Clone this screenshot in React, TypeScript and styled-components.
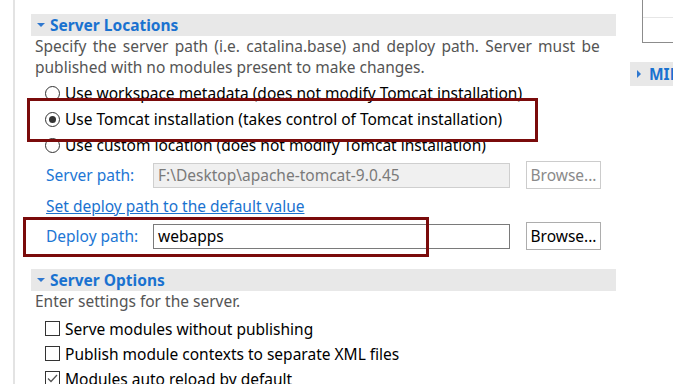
import React from 'react'
import styled, { createGlobalStyle } from 'styled-components'

const GlobalStyle = createGlobalStyle`
  html, body {
    margin: 0;
    padding: 0;
    background: #ffffff;
    overflow: hidden;
  }
  body {
    font-family: "Noto Sans", "Liberation Sans", sans-serif;
    font-size: 15.5px;
    color: #000;
  }
`

const Page = styled.div`
  display: flex;
  width: 673px;
  height: 384px;
  overflow: hidden;
`

const Rail = styled.div`
  width: 13px;
  flex: none;
  border-right: 2px solid #e3e3e3;
  margin-right: 16px;
`

const Main = styled.div`
  position: relative;
  width: 585px;
  flex: none;
  padding-top: 14px;
  display: flex;
  flex-direction: column;
`

const SectionHeader = styled.div<{ $top?: number }>`
  display: flex;
  align-items: center;
  height: 22px;
  margin-top: ${p => p.$top ?? 0}px;
  background: #e8e8e8;
  padding-left: 6px;
  gap: 5px;
  color: #1a72d0;
  font-weight: bold;
  font-size: 15.5px;
`

const Caret = styled.span<{ $open?: boolean }>`
  width: 0;
  height: 0;
  ${p => p.$open
    ? `border-left: 4px solid transparent;
       border-right: 4px solid transparent;
       border-top: 4px solid #2f78cf;`
    : `border-top: 4px solid transparent;
       border-bottom: 4px solid transparent;
       border-left: 4px solid #2f78cf;`}
`

const Description = styled.div`
  color: #555;
  line-height: 21px;
  padding-left: 4px;
  white-space: nowrap;
`

const WideLine = styled.span`
  word-spacing: 2.2px;
`

const Options = styled.div<{ $top: number }>`
  display: flex;
  flex-direction: column;
  padding-left: 14px;
  margin-top: ${p => p.$top}px;
`

const OptionRow = styled.div<{ $h: number }>`
  display: flex;
  align-items: center;
  gap: 5px;
  height: ${p => p.$h}px;
  line-height: 20px;
  white-space: nowrap;
`

const Radio = styled.span<{ $checked?: boolean }>`
  position: relative;
  box-sizing: border-box;
  width: 15px;
  height: 15px;
  flex: none;
  border: 1px solid #333;
  border-radius: 50%;
  background: #fff;
  &::after {
    content: '';
    display: ${p => (p.$checked ? 'block' : 'none')};
    position: absolute;
    left: 3px;
    top: 3px;
    width: 7px;
    height: 7px;
    border-radius: 50%;
    background: #333;
  }
`

const Check = styled.span`
  box-sizing: border-box;
  width: 15px;
  height: 15px;
  flex: none;
  border: 1px solid #333;
  background: #fff;
  display: flex;
  align-items: center;
  justify-content: center;
`

const FieldRow = styled.div<{ $top: number }>`
  display: flex;
  align-items: center;
  margin-top: ${p => p.$top}px;
  padding-left: 15px;
`

const FieldLabel = styled.span`
  width: 107px;
  flex: none;
  color: #2176d4;
`

const TextInput = styled.div<{ $disabled?: boolean }>`
  box-sizing: border-box;
  width: 357px;
  height: 25px;
  display: flex;
  align-items: center;
  padding-left: 4px;
  border: 1px solid ${p => (p.$disabled ? '#cfcfcf' : '#7a7a7a')};
  background: ${p => (p.$disabled ? '#f0f0f0' : '#fff')};
  color: ${p => (p.$disabled ? '#7a7a7a' : '#000')};
`

const Button = styled.div<{ $disabled?: boolean }>`
  box-sizing: border-box;
  width: 75px;
  height: 28px;
  margin-left: 16px;
  display: flex;
  align-items: center;
  justify-content: center;
  border: 1px solid ${p => (p.$disabled ? '#cccccc' : '#adadad')};
  background: #fff;
  color: ${p => (p.$disabled ? '#8a8a8a' : '#000')};
`

const Link = styled.a`
  margin: 7px 0 3px 15px;
  color: #1a72d0;
  text-decoration: underline;
  line-height: 21px;
  cursor: pointer;
`

const Highlight = styled.div<{ $l: number; $t: number; $w: number; $h: number }>`
  position: absolute;
  left: ${p => p.$l}px;
  top: ${p => p.$t}px;
  width: ${p => p.$w}px;
  height: ${p => p.$h}px;
  box-sizing: border-box;
  border: 3px solid #7a0b0b;
  pointer-events: none;
`

const Side = styled.div`
  flex: 1;
  margin-left: 14px;
  display: flex;
  flex-direction: column;
`

const SideBox = styled.div`
  margin-left: 12px;
  height: 43px;
  box-sizing: border-box;
  border: 1px solid #8c8c8c;
  border-top: none;
  border-right: none;
`

const SideBoxLine = styled.div`
  height: 17px;
  border-bottom: 1px solid #e6e6e6;
`

const SideHeader = styled(SectionHeader)`
  margin-top: 19px;
  height: 24px;
  white-space: nowrap;
  overflow: hidden;
  gap: 8px;
  padding-left: 7px;
`

const locationOptions = [
  { label: 'Use workspace metadata (does not modify Tomcat installation)', checked: false },
  { label: 'Use Tomcat installation (takes control of Tomcat installation)', checked: true },
  { label: 'Use custom location (does not modify Tomcat installation)', checked: false },
]

const serverOptions = [
  { label: 'Serve modules without publishing', checked: false },
  { label: 'Publish module contexts to separate XML files', checked: false },
  { label: 'Modules auto reload by default', checked: true },
]

export default function App() {
  return (
    <Page>
      <GlobalStyle />
      <Rail />
      <Main>
        <SectionHeader>
          <Caret $open />
          Server Locations
        </SectionHeader>
        <Description>
          <WideLine>Specify the server path (i.e. catalina.base) and deploy path. Server must be</WideLine>
          <br />
          published with no modules present to make changes.
        </Description>
        <Options $top={2}>
          {locationOptions.map(o => (
            <OptionRow key={o.label} $h={26}>
              <Radio $checked={o.checked} />
              {o.label}
            </OptionRow>
          ))}
        </Options>
        <FieldRow $top={3}>
          <FieldLabel>Server path:</FieldLabel>
          <TextInput $disabled>F:\Desktop\apache-tomcat-9.0.45</TextInput>
          <Button $disabled>Browse...</Button>
        </FieldRow>
        <Link>Set deploy path to the default value</Link>
        <FieldRow $top={2}>
          <FieldLabel>Deploy path:</FieldLabel>
          <TextInput>webapps</TextInput>
          <Button>Browse...</Button>
        </FieldRow>
        <SectionHeader $top={19}>
          <Caret $open />
          Server Options
        </SectionHeader>
        <Description>Enter settings for the server.</Description>
        <Options $top={4}>
          {serverOptions.map(o => (
            <OptionRow key={o.label} $h={25}>
              <Check>
                {o.checked && (
                  <svg width="11" height="9" viewBox="0 0 11 9">
                    <path d="M1 4.5 L4 7.5 L10 1" fill="none" stroke="#555" strokeWidth="1.3" />
                  </svg>
                )}
              </Check>
              {o.label}
            </OptionRow>
          ))}
        </Options>
        <Highlight $l={-4} $t={98} $w={511} $h={44} />
        <Highlight $l={-8} $t={217} $w={406} $h={40} />
      </Main>
      <Side>
        <SideBox>
          <SideBoxLine />
        </SideBox>
        <SideHeader>
          <Caret />
          MIME
        </SideHeader>
      </Side>
    </Page>
  )
}
